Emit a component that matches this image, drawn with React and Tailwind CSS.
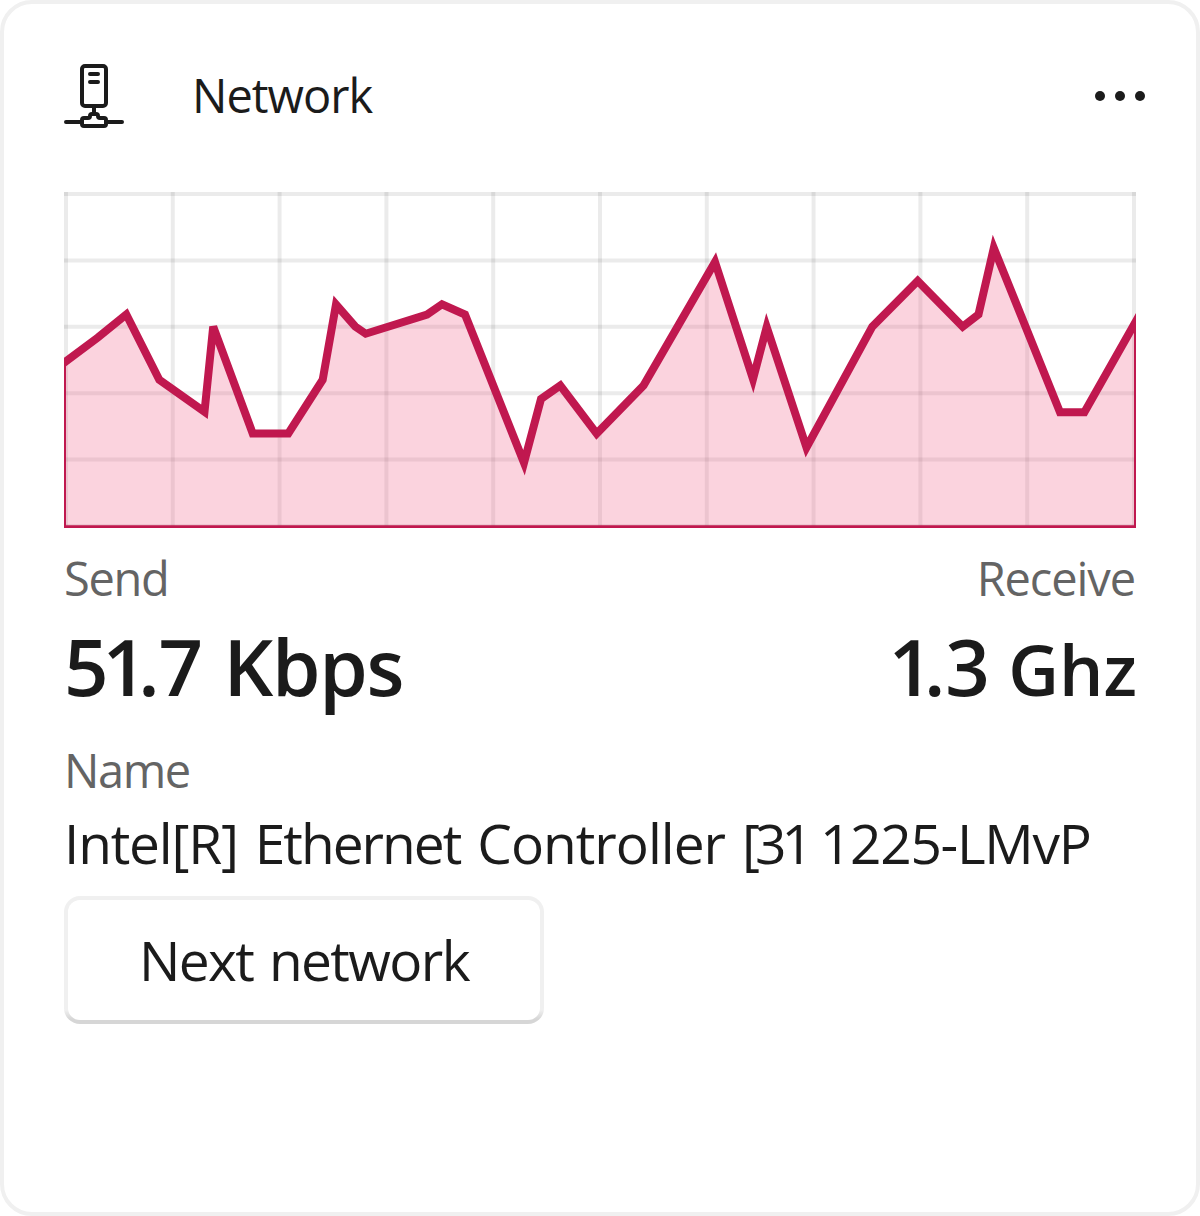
const LINE =
  "M62 364.3L97.7 337.7L126.3 314.5L159.3 379.8L204.5 411.8L213.2 326.7L252.7 433.4H288.3L322.7 379.7L336 304.5L355.2 326.5L365.7 333.7L427 314.5L442 304.3L465 314.6L524 462.8L541 399L560.3 385.5L596.7 433.6L643.5 385.5L715 262L753 379L766.7 327L806.5 447.5L872.3 326.7L917.7 281L962.7 326.7L978.5 314.5L993.8 248L1060 412.2H1084.4L1138 317.5V529.2H62Z";

const COLUMNS = Array.from({ length: 11 }, (_, i) => 66 + i * 106.8);
const ROWS = Array.from({ length: 6 }, (_, i) => 194 + i * 66.4);

function NetworkIcon() {
  return (
    <svg className="h-16 w-[60px]" viewBox="64 64 60 64" fill="none" stroke="#1b1b1b" strokeWidth="4" strokeLinecap="round" strokeLinejoin="round">
      <rect x="82" y="66" width="24" height="40" rx="3" />
      <path d="M90 74H98M90 82H98M94 107V113M66 122H81M107 122H122" />
      <path d="M84 118H88Q90 118 90 116Q90 114 92 114H96Q98 114 98 116Q98 118 100 118H104Q106 118 106 120V124Q106 126 104 126H84Q82 126 82 124V120Q82 118 84 118Z" />
    </svg>
  );
}

function Chart() {
  return (
    <svg className="block h-[336px] w-[1072px]" viewBox="64 192 1072 336">
      <g stroke="#000" strokeOpacity="0.08" strokeWidth="4">
        {COLUMNS.map((x) => <line key={x} x1={x} x2={x} y1="192" y2="528" />)}
        {ROWS.map((y) => <line key={y} x1="64" x2="1136" y1={y} y2={y} />)}
      </g>
      <path d={LINE} fill="#f04f7b" fillOpacity="0.25" stroke="#c0184f" strokeWidth="8" />
    </svg>
  );
}

export default function App() {
  return (
    <main className="flex h-[1216px] w-[1200px] flex-col rounded-[32px] border-4 border-[#f0f0f0] bg-white px-[60px] font-['Open_Sans',sans-serif] whitespace-nowrap text-[#1b1b1b]">
      <header className="mt-[60px] flex h-16 items-center">
        <NetworkIcon />
        <h1 className="ml-[68px] pb-[3px] text-[47px] leading-[60px] tracking-[-1px]">Network</h1>
        <button className="-mr-[9px] ml-auto flex gap-[10px]" aria-label="More options">
          <i className="size-[10px] rounded-full bg-[#1b1b1b]" />
          <i className="size-[10px] rounded-full bg-[#1b1b1b]" />
          <i className="size-[10px] rounded-full bg-[#1b1b1b]" />
        </button>
      </header>
      <section className="mt-16"><Chart /></section>
      <div className="mt-[18px] flex h-16 justify-between text-[47px] leading-[64px] text-[#646464]">
        <span className="tracking-[-1.3px]">Send</span>
        <span className="mr-px tracking-[-1.1px]">Receive</span>
      </div>
      <div className="flex h-28 justify-between text-[78px] leading-[112px] font-semibold">
        <span><span className="tracking-[-6px]">5</span><span className="tracking-[-9px]">1</span><span className="tracking-[-1px]">.</span>7 <span className="tracking-[-1.3px]">Kbps</span></span>
        <span className="-mr-px"><span className="tracking-[-9px]">1</span>.3<span className="tracking-[-2px]"> </span><span className="text-[70px]">Ghz</span></span>
      </div>
      <div className="mt-4 flex h-16 text-[47px] leading-[64px] tracking-[-1.4px] text-[#646464]">Name</div>
      <div className="flex h-[82px] text-[55px] leading-[82px]">
        <span className="mr-[17px] tracking-[-1.2px]">Intel[R]</span>
        <span className="mr-[17px] tracking-[-2px]">Ethernet</span>
        <span className="mr-[17px] tracking-[-1px]">Controller</span>
        <span className="mr-[12px] tracking-[-5px]">[31</span>
        <span className="tracking-[-1.3px]">1225-LMvP</span>
      </div>
      <button className="mt-3 flex h-32 w-[480px] rounded-2xl bg-[linear-gradient(to_bottom,#f0f0f0_calc(100%-14px),#d6d6d6_calc(100%-5px))] p-1">
        <span className="flex h-full w-full items-center justify-center rounded-xl bg-white text-[55px] tracking-[-1.6px] [word-spacing:3px]">Next network</span>
      </button>
    </main>
  );
}
